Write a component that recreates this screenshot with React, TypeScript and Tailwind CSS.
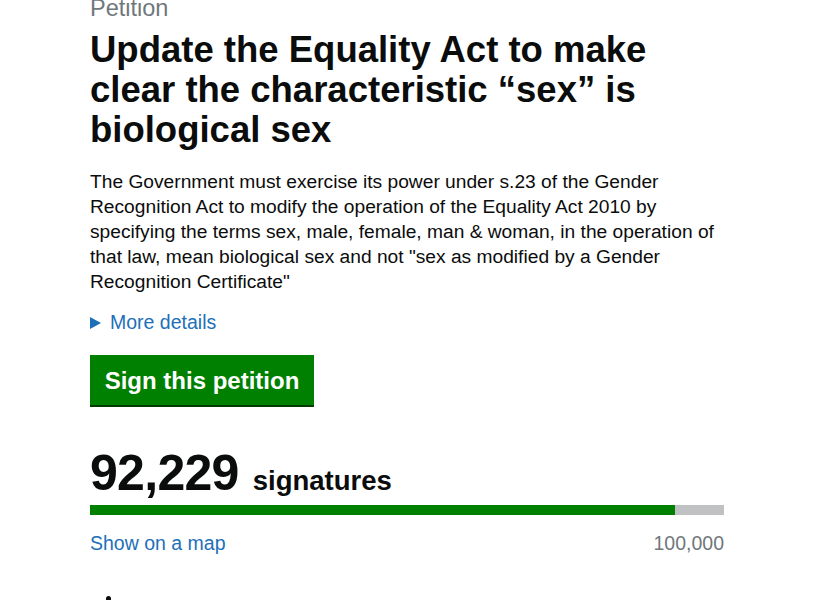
const App = () => {
  return (
    <div className="w-[815px] h-[600px] overflow-hidden bg-white font-['Liberation_Sans',Arial,sans-serif] text-[#0b0c0c]">
      <div className="ml-[90px] w-[634px] -mt-[6px]">
        <p className="text-[23.5px] leading-[28px] text-[#6f777b]">Petition</p>
        <h1 className="mt-[8px] text-[36.5px] leading-[40px] font-bold">
          Update the Equality Act to make clear the characteristic “sex” is biological sex
        </h1>
        <p className="mt-[19px] text-[19.2px] leading-[25px]">
          The Government must exercise its power under s.23 of the Gender Recognition Act to modify the operation of the
          Equality Act 2010 by specifying the terms sex, male, female, man &amp; woman, in the operation of that law, mean
          biological sex and not "sex as modified by a Gender Recognition Certificate"
        </p>
        <div className="mt-[16px] flex items-center gap-[9px] text-[19.5px] leading-[25px] text-[#1d70b8]">
          <span className="w-0 h-0 border-y-[6px] border-y-transparent border-l-[11px] border-l-[#1d70b8]" />
          <span>More details</span>
        </div>
        <button className="mt-[20px] h-[50px] w-[224px] bg-[#008000] shadow-[0_2px_0_#003b00] text-white text-[24px] font-bold leading-none">
          <span className="relative top-[1px]">Sign this petition</span>
        </button>
        <div className="mt-[40px] flex items-baseline gap-[14px]">
          <span className="text-[50px] leading-[56px] font-bold tracking-[-0.7px]">92,229</span>
          <span className="text-[27.5px] font-bold">signatures</span>
        </div>
        <div className="mt-[4px] h-[10px] bg-[#bfc1c3] flex">
          <div className="h-full bg-[#008000]" style={{ width: `${(92229 / 100000) * 100}%` }} />
        </div>
        <div className="mt-[16px] flex justify-between text-[19.5px] leading-[25px]">
          <span className="text-[#1d70b8]">Show on a map</span>
          <span className="text-[#6f777b]">100,000</span>
        </div>
        <div className="mt-[40px] ml-[16px] w-[5px] h-[6px] rounded-t-full bg-[#0b0c0c]" />
      </div>
    </div>
  )
}

export default App
